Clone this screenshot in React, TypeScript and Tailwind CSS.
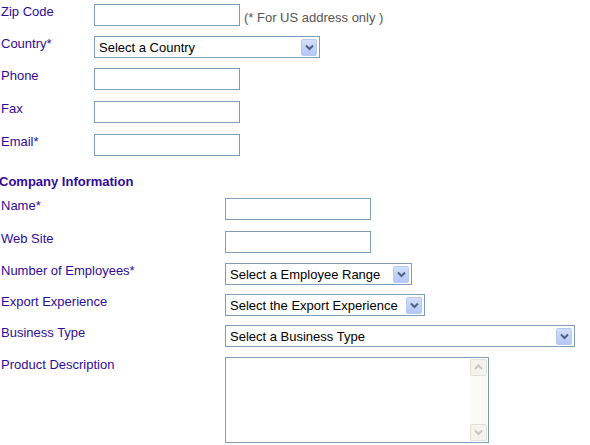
import React from "react";

const Chevron = ({ color = "#4d6185" }: { color?: string }) => (
  <svg width="9" height="7" viewBox="0 0 9 7">
    <path d="M1 1.5 L4.5 5 L8 1.5" fill="none" stroke={color} strokeWidth="2" />
  </svg>
);

const Select = ({ text, w }: { text: string; w: string }) => (
  <div className={`${w} h-[22px] border border-[#7f9db9] bg-white flex items-center justify-between pl-[4px] pr-[2px]`}>
    <span className="text-[13px] text-black whitespace-nowrap leading-none">{text}</span>
    <div className="w-[16px] h-[17px] rounded-[2px] border border-[#b8c9f0] bg-gradient-to-b from-[#d2defc] to-[#b4c8f7] flex items-center justify-center">
      <Chevron />
    </div>
  </div>
);

const Input = ({ w = "w-[146px]" }: { w?: string }) => (
  <div className={`${w} h-[22px] border border-[#7f9db9] bg-white`} />
);

const Label = ({ children, w }: { children: React.ReactNode; w: string }) => (
  <div className={`${w} shrink-0 pl-[1px] text-[13px] leading-[15px] text-[#300b9a]`}>{children}</div>
);

export default function App() {
  return (
    <div className="w-[590px] h-[445px] bg-white overflow-hidden" style={{ fontFamily: '"Liberation Sans", Arial, sans-serif' }}>
      <div className="pt-[4px] flex flex-col">
        <div className="flex h-[32px]">
          <Label w="w-[94px]">Zip Code</Label>
          <Input />
          <span className="ml-[4px] mt-[6px] text-[13px] leading-[15px] text-[#555]">(* For US address only )</span>
        </div>
        <div className="flex h-[32px]">
          <Label w="w-[94px]">Country*</Label>
          <Select text="Select a Country" w="w-[226px]" />
        </div>
        <div className="flex h-[33px]">
          <Label w="w-[94px]">Phone</Label>
          <Input />
        </div>
        <div className="flex h-[33px]">
          <Label w="w-[94px]">Fax</Label>
          <Input />
        </div>
        <div className="flex h-[22px]">
          <Label w="w-[94px]">Email*</Label>
          <Input />
        </div>
        <div className="mt-[19px] ml-[-1px] h-[23px] text-[13px] leading-[14px] font-bold text-[#300b9a]">Company Information</div>
        <div className="flex h-[33px]">
          <Label w="w-[225px]">Name*</Label>
          <Input />
        </div>
        <div className="flex h-[32px]">
          <Label w="w-[225px]">Web Site</Label>
          <Input />
        </div>
        <div className="flex h-[31px]">
          <Label w="w-[225px]">Number of Employees*</Label>
          <Select text="Select a Employee Range" w="w-[187px]" />
        </div>
        <div className="flex h-[31px]">
          <Label w="w-[225px]">Export Experience</Label>
          <Select text="Select the Export Experience" w="w-[200px]" />
        </div>
        <div className="flex h-[32px]">
          <Label w="w-[225px]">Business Type</Label>
          <Select text="Select a Business Type" w="w-[350px]" />
        </div>
        <div className="flex">
          <Label w="w-[225px]">Product Description</Label>
          <div className="w-[264px] h-[86px] border border-[#7f9db9] bg-white flex justify-end p-[1px]">
            <div className="w-[17px] h-full bg-[#fbfbf6] flex flex-col justify-between">
              <div className="h-[17px] border border-[#e2e1d8] rounded-[2px] bg-[#f4f3ee] flex items-center justify-center">
                <svg width="9" height="7" viewBox="0 0 9 7"><path d="M1 5 L4.5 1.5 L8 5" fill="none" stroke="#c9c8c0" strokeWidth="2" /></svg>
              </div>
              <div className="h-[17px] border border-[#e2e1d8] rounded-[2px] bg-[#f4f3ee] flex items-center justify-center">
                <Chevron color="#c9c8c0" />
              </div>
            </div>
          </div>
        </div>
      </div>
    </div>
  );
}
